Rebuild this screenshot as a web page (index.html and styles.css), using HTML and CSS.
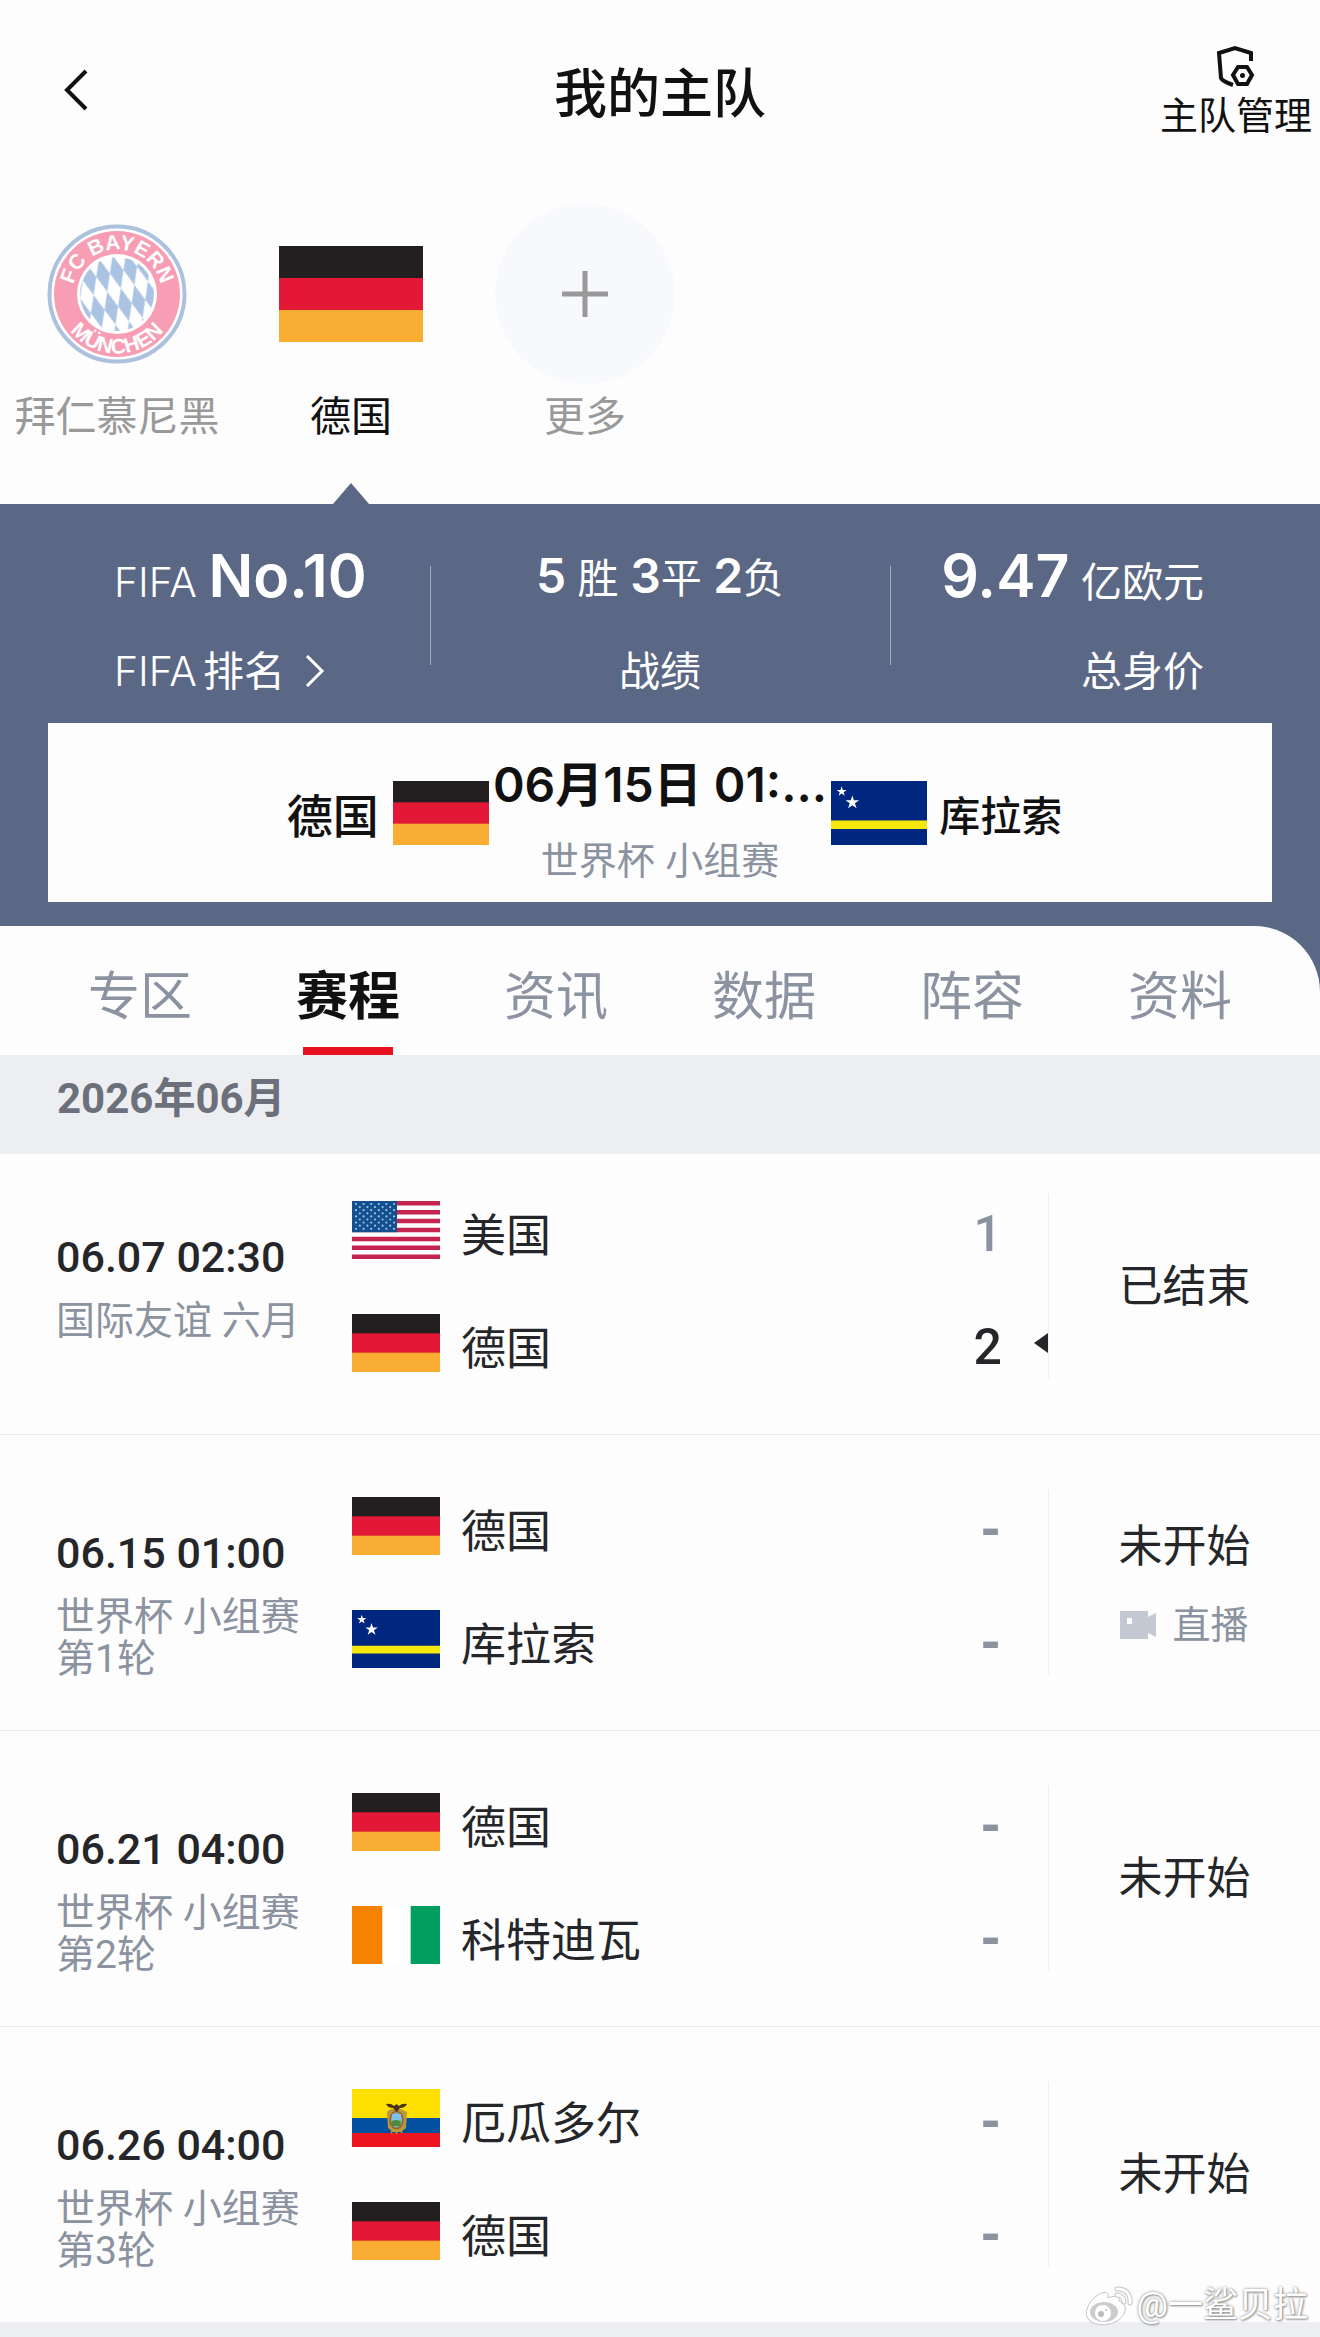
FILE: index.html
```html
<!DOCTYPE html>
<html lang="zh-CN">

<head>
    <meta charset="UTF-8">
    <meta name="viewport" content="width=device-width, initial-scale=1.0">
    <title>我的主队</title>
    <link rel="stylesheet" href="styles.css">
</head>

<body>
    <!-- Shared flags -->
    <svg class="sprite" aria-hidden="true">
        <symbol id="flag-de" viewBox="0 0 90 60" preserveAspectRatio="none">
            <rect width="90" height="60" fill="#231f20" />
            <rect y="20" width="90" height="40" fill="#e31836" />
            <rect y="40" width="90" height="20" fill="#f9ae33" />
        </symbol>
        <symbol id="flag-cw" viewBox="0 0 90 60" preserveAspectRatio="none">
            <rect width="90" height="60" fill="#002780" />
            <rect y="37" width="90" height="8" fill="#f7e80c" />
            <path fill="#fff" d="M10 5l1.1 3.4h3.6l-2.9 2.1 1.1 3.4-2.9-2.1-2.9 2.1 1.1-3.4-2.9-2.1h3.6z" />
            <path fill="#fff" d="M20 13.5l1.5 4.6h4.9l-4 2.8 1.6 4.7-4-2.9-4 2.9 1.6-4.7-4-2.8h4.9z" />
        </symbol>
        <symbol id="flag-us" viewBox="0 0 88 58" preserveAspectRatio="none">
            <rect width="88" height="58" fill="#fff" />
            <path stroke="#c4244f" stroke-width="4.46" d="M0 2.2h88M0 11.2h88M0 20.1h88M0 29h88M0 37.9h88M0 46.8h88M0 55.8h88" />
            <rect width="45" height="31.2" fill="#14508f" />
            <path stroke="#9dc0e0" stroke-width="2.2" stroke-linecap="round" stroke-dasharray="0 7.6" d="M4 3h40M4 9.2h40M4 15.4h40M4 21.6h40M4 27.8h40" />
            <path stroke="#9dc0e0" stroke-width="2.2" stroke-linecap="round" stroke-dasharray="0 7.6" d="M7.8 6.1h32M7.8 12.3h32M7.8 18.5h32M7.8 24.7h32" />
        </symbol>
        <symbol id="flag-ci" viewBox="0 0 90 60" preserveAspectRatio="none">
            <rect width="90" height="60" fill="#fff" />
            <rect width="31" height="60" fill="#f58200" />
            <rect x="60" width="30" height="60" fill="#009f60" />
        </symbol>
        <symbol id="flag-ec" viewBox="0 0 88 58" preserveAspectRatio="none">
            <rect width="88" height="58" fill="#ffdf00" />
            <rect y="29" width="88" height="15" fill="#0350a0" />
            <rect y="44" width="88" height="14" fill="#ed1620" />
            <path fill="#b59a3c" d="M35 23l4-3h10l6 3-1 16-5 4h-8l-5-4z" />
            <ellipse cx="44.500" cy="31" rx="6.500" ry="8.500" fill="#74b5a5" stroke="#a35a28" stroke-width="1.500" />
            <path fill="#7fc0e8" d="M40 25h9v6h-9z" />
            <path fill="#4c8c3c" d="M39 33q5-4 10 0l-1 4h-8z" />
            <path fill="#4a3319" d="M34 15q5-1 8 2l2.500-2 2.500 2q3-3 8-2-2 4-7 4l-3.500 4-3.500-4q-5 0-7-4z" />
            <path stroke="#c79a2c" stroke-width="1.500" d="M41 41l-2 3M44.500 42v3M48 41l2 3" />
        </symbol>
    </svg>

    <header class="header">
        <button type="button" class="back" aria-label="返回">
            <svg width="26" height="44" viewBox="0 0 26 44" fill="none" stroke="#111" stroke-width="4">
                <path d="M23 3L4 22l19 19" />
            </svg>
        </button>
        <h1>我的主队</h1>
        <button type="button" class="manage">
            <svg width="42" height="44" viewBox="0 0 42 44" fill="none" stroke="#111" stroke-width="4">
                <path d="M36 17V9L20 4 4 9l2 25q1 3 12 7" />
                <path d="M23 23h9l5 8-5 9h-9l-5-9z" />
                <circle cx="27.500" cy="31.500" r="2.500" fill="#111" stroke="none" />
            </svg>
            <span>主队管理</span>
        </button>
    </header>

    <nav class="teams">
        <a href="#" class="team">
            <span class="team-pic">
                <svg width="140" height="140" viewBox="0 0 140 140">
                    <defs>
                        <path id="arc-top" d="M25.500 70a44.500 44.500 0 0 1 89 0v12" />
                        <path id="arc-bottom" d="M10.500 70a59.500 59.500 0 0 0 119 0" />
                        <pattern id="lozenge" width="14" height="34" patternUnits="userSpaceOnUse" patternTransform="translate(67 66) rotate(-14)">
                            <rect width="14" height="34" fill="#fff" />
                            <path fill="#abc3e3" d="M7 0l7 17-7 17-7-17z" />
                        </pattern>
                    </defs>
                    <circle cx="70" cy="70" r="67.500" fill="#fff" stroke="#abc1de" stroke-width="4" />
                    <circle cx="70" cy="70" r="63" fill="#f79db4" />
                    <circle cx="70" cy="70" r="40" fill="#fff" />
                    <circle cx="70" cy="70" r="37" fill="url(#lozenge)" />
                    <text class="crest-text">
                        <textPath href="#arc-top" startOffset="46%">FC BAYERN</textPath>
                    </text>
                    <text class="crest-text">
                        <textPath href="#arc-bottom" startOffset="50%">MÜNCHEN</textPath>
                    </text>
                </svg>
            </span>
            <span class="team-label">拜仁慕尼黑</span>
        </a>
        <a href="#" class="team active">
            <span class="team-pic"><svg class="flag-big"><use href="#flag-de" /></svg></span>
            <span class="team-label">德国</span>
        </a>
        <a href="#" class="team">
            <span class="team-pic more">
                <svg width="46" height="46" viewBox="0 0 46 46" stroke="#999" stroke-width="5">
                    <path d="M23 0v46M0 23h46" />
                </svg>
            </span>
            <span class="team-label">更多</span>
        </a>
    </nav>

    <section class="summary">
        <div class="stats">
            <a href="#" class="stat stat-left">
                <p class="stat-value">FIFA <b>No.10</b></p>
                <p class="stat-label">FIFA<span class="rank">排名</span>
                    <svg width="20" height="32" viewBox="0 0 20 32" fill="none" stroke="#fff" stroke-width="3">
                        <path d="M2 1l15 15L2 31" />
                    </svg>
                </p>
            </a>
            <div class="stat">
                <p class="stat-value record"><b>5</b> 胜 <b>3</b>平 <b>2</b>负</p>
                <p class="stat-label">战绩</p>
            </div>
            <div class="stat stat-right">
                <p class="stat-value"><b>9.47</b> 亿欧元</p>
                <p class="stat-label">总身价</p>
            </div>
        </div>

        <a href="#" class="next-match">
            <span class="side home"><span class="home-name">德国</span><svg class="flag-mid"><use href="#flag-de" /></svg></span>
            <span class="when">
                <span class="when-date">06月15日 01:...</span>
                <span class="when-cup">世界杯 小组赛</span>
            </span>
            <span class="side"><svg class="flag-mid"><use href="#flag-cw" /></svg><span class="away-name">库拉索</span></span>
        </a>
    </section>

    <div class="tabs-wrap">
        <nav class="tabs">
            <a href="#">专区</a>
            <a href="#" class="active">赛程</a>
            <a href="#">资讯</a>
            <a href="#">数据</a>
            <a href="#">阵容</a>
            <a href="#">资料</a>
        </nav>
    </div>

    <main>
        <h2 class="month">2026年06月</h2>

        <article class="match first">
            <div class="info">
                <p class="time">06.07 02:30</p>
                <p class="cup">国际友谊 六月</p>
            </div>
            <div class="sides">
                <div class="row"><svg class="flag"><use href="#flag-us" /></svg><span class="name">美国</span><span class="score">1</span></div>
                <div class="row win"><svg class="flag"><use href="#flag-de" /></svg><span class="name">德国</span><span class="score">2</span></div>
            </div>
            <div class="status">已结束</div>
        </article>

        <article class="match">
            <div class="info">
                <p class="time">06.15 01:00</p>
                <p class="cup">世界杯 小组赛<br>第1轮</p>
            </div>
            <div class="sides">
                <div class="row"><svg class="flag"><use href="#flag-de" /></svg><span class="name">德国</span><span class="score none">-</span></div>
                <div class="row"><svg class="flag"><use href="#flag-cw" /></svg><span class="name">库拉索</span><span class="score none">-</span></div>
            </div>
            <div class="status">
                未开始
                <a href="#" class="live">
                    <svg width="36" height="28" viewBox="0 0 36 28">
                        <path fill="#c4c8d3" fill-rule="evenodd" d="M0 0h28v6l8-4v24l-8-4v6H0zM7 7v6h5V7z" />
                    </svg>
                    直播
                </a>
            </div>
        </article>

        <article class="match">
            <div class="info">
                <p class="time">06.21 04:00</p>
                <p class="cup">世界杯 小组赛<br>第2轮</p>
            </div>
            <div class="sides">
                <div class="row"><svg class="flag"><use href="#flag-de" /></svg><span class="name">德国</span><span class="score none">-</span></div>
                <div class="row"><svg class="flag"><use href="#flag-ci" /></svg><span class="name">科特迪瓦</span><span class="score none">-</span></div>
            </div>
            <div class="status">未开始</div>
        </article>

        <article class="match">
            <div class="info">
                <p class="time">06.26 04:00</p>
                <p class="cup">世界杯 小组赛<br>第3轮</p>
            </div>
            <div class="sides">
                <div class="row"><svg class="flag"><use href="#flag-ec" /></svg><span class="name">厄瓜多尔</span><span class="score none">-</span></div>
                <div class="row"><svg class="flag"><use href="#flag-de" /></svg><span class="name">德国</span><span class="score none">-</span></div>
            </div>
            <div class="status">未开始</div>
        </article>

        <div class="watermark">
            <svg width="48" height="40" viewBox="0 0 48 40">
                <path fill="#fff" stroke="#c4c4c4" d="M17 7c5-2 7 0 6 5 6-3 13-2 11 3 10 3 7 15-2 20-10 6-26 5-30-4C-1 22 8 10 17 7z" />
                <ellipse cx="19" cy="26" rx="14" ry="10" fill="#ccc" />
                <circle cx="18" cy="27" r="8" fill="#fff" />
                <circle cx="16" cy="28" r="3" fill="#bbb" />
                <circle cx="21" cy="24" r="1" fill="#bbb" />
                <g fill="none" stroke-linecap="round">
                    <path stroke="#c4c4c4" stroke-width="5" d="M32 3c8-1 14 5 13 14M32 9c4 0 7 3 7 7" />
                    <path stroke="#fff" stroke-width="3" d="M32 3c8-1 14 5 13 14M32 9c4 0 7 3 7 7" />
                </g>
            </svg>
            <span>@一鲨贝拉</span>
        </div>
    </main>
</body>

</html>
```
FILE: styles.css
```css
* {
    box-sizing: border-box;
}

body {
    margin: 0;
    font-family: Inter, "Noto Sans CJK SC", sans-serif;
    background-color: #edeef2;
    color: #111;
}

h1,
h2,
p {
    margin: 0;
}

a {
    color: inherit;
    text-decoration: none;
}

button {
    padding: 0;
    border: none;
    background: none;
    color: inherit;
    font-family: inherit;
    cursor: pointer;
}

svg {
    display: block;
    flex-shrink: 0;
}

.sprite {
    position: absolute;
    width: 0;
    height: 0;
}

/* Header */
.header {
    display: grid;
    grid-template-columns: 1fr auto 1fr;
    align-items: center;
    height: 186px;
    background-color: #fdfdfd;
}

.header h1 {
    padding-top: 2px;
    font-size: 53px;
    font-weight: 500;
    line-height: 80px;
}

.back {
    justify-self: start;
    padding: 0 0 6px 63px;
}

.manage {
    justify-self: end;
    display: flex;
    flex-direction: column;
    align-items: center;
    padding-right: 8px;
    font-size: 38px;
    line-height: 54px;
}

/* Followed teams */
.teams {
    display: flex;
    padding: 18px 0 56px;
    background-color: #fdfdfd;
}

.team {
    position: relative;
    display: flex;
    flex-direction: column;
    align-items: center;
    width: 234px;
    color: #999;
}

.team.active {
    color: #111;
}

.team.active::after {
    content: "";
    position: absolute;
    bottom: -56px;
    border: 18px solid transparent;
    border-top: none;
    border-bottom: 21px solid #5b6885;
}

.team-pic {
    display: flex;
    align-items: center;
    justify-content: center;
    width: 180px;
    height: 180px;
}

.more {
    border-radius: 50%;
    background-color: #f8f9fd;
}

.team-label {
    font-size: 41px;
    line-height: 64px;
}

.crest-text {
    fill: #fff;
    font-family: "Liberation Sans", sans-serif;
    font-size: 21px;
    font-weight: 700;
    text-anchor: middle;
}

.flag-big {
    width: 144px;
    height: 96px;
}

/* Summary */
.summary {
    padding-bottom: 24px;
    background-color: #5b6885;
    color: #fff;
}

.stats {
    display: grid;
    grid-template-columns: 15fr 16fr 15fr;
    padding: 36px 0 22px;
}

.stat {
    position: relative;
    text-align: center;
}

.stat + .stat::before {
    content: "";
    position: absolute;
    top: 26px;
    left: 0;
    width: 1px;
    height: 99px;
    background-color: #a5adbd;
}

.stat-left {
    padding-left: 114px;
    font-weight: 300;
    text-align: left;
}

.stat-right {
    padding-right: 116px;
    text-align: right;
}

.stat-value {
    height: 72px;
    margin-bottom: 29px;
    font-size: 41px;
    line-height: 72px;
}

.stat-value b {
    font-size: 59px;
    font-weight: 600;
}

.stat-value.record b {
    font-size: 48px;
}

.stat-label {
    font-size: 41px;
    line-height: 60px;
}

.stat-left .stat-label {
    display: flex;
    align-items: center;
}

.rank {
    margin: 0 20px 0 6px;
    font-weight: 400;
}

.next-match {
    display: grid;
    grid-template-columns: 1fr 28% 1fr;
    align-items: center;
    height: 179px;
    margin: 0 48px;
    background-color: #fdfdfd;
    color: #111;
}

.side {
    display: flex;
    align-items: center;
}

.home {
    justify-content: flex-end;
}

.home-name {
    margin-right: 14px;
    font-size: 46px;
    font-weight: 500;
}

.away-name {
    margin-left: 12px;
    font-size: 41px;
    font-weight: 500;
}

.flag-mid {
    width: 96px;
    height: 64px;
}

.when {
    padding-top: 14px;
    text-align: center;
    white-space: nowrap;
}

.when-date,
.when-cup {
    display: block;
}

.when-date {
    font-size: 48px;
    font-weight: 600;
    line-height: 80px;
}

.when-cup {
    color: #8b92a0;
    font-size: 38px;
    line-height: 70px;
}

/* Tabs */
.tabs-wrap {
    background-color: #5b6885;
}

.tabs {
    display: flex;
    height: 129px;
    padding: 0 36px;
    border-top-right-radius: 66px;
    background-color: #fdfdfd;
}

.tabs a {
    position: relative;
    flex: 1;
    color: #8b92a0;
    font-size: 52px;
    line-height: 142px;
    text-align: center;
}

.tabs .active {
    color: #111;
    font-weight: 700;
}

.tabs .active::after {
    content: "";
    position: absolute;
    bottom: 0;
    left: 50%;
    width: 90px;
    height: 8px;
    margin-left: -45px;
    background-color: #e6101f;
}

/* Schedule */
main {
    position: relative;
    padding-bottom: 14px;
    font-family: Roboto, "Noto Sans CJK SC", sans-serif;
    color: #252629;
}

.month {
    height: 99px;
    padding-left: 57px;
    color: #6c707b;
    font-size: 42px;
    font-weight: 700;
    line-height: 88px;
}

.match {
    display: grid;
    grid-template-columns: 352px 1fr 272px;
    padding: 62px 0;
    border-bottom: 1px solid #e9eaee;
    background-color: #fdfdfd;
}

.match.first {
    padding-top: 47px;
}

.match:last-of-type {
    border-bottom: none;
}

.info {
    height: 171px;
    padding: 30px 0 0 56px;
    white-space: nowrap;
}

.time {
    font-size: 43px;
    font-weight: 500;
    line-height: 52px;
}

.cup {
    margin-top: 17px;
    color: #8b92a0;
    font-size: 39px;
    line-height: 42px;
}

.sides {
    display: flex;
    flex-direction: column;
    gap: 55px;
}

.row {
    position: relative;
    display: flex;
    align-items: center;
    height: 58px;
    padding-right: 46px;
}

.flag {
    width: 88px;
    height: 58px;
}

.name {
    margin-left: 21px;
    padding-top: 5px;
    font-size: 45px;
}

.score {
    margin-left: auto;
    padding-top: 8px;
    color: #8b92a0;
    font-size: 50px;
    font-weight: 500;
}

.score.none {
    font-weight: 900;
}

.win .score {
    color: #252629;
}

.win::after {
    content: "";
    position: absolute;
    right: 0;
    border: 10px solid transparent;
    border-left: none;
    border-right: 14px solid #252629;
}

.status {
    display: flex;
    flex-direction: column;
    align-items: center;
    justify-content: center;
    gap: 20px;
    height: 185px;
    margin: -7px 0;
    border-left: 1px solid #eeeff3;
    font-size: 44px;
    line-height: 64px;
}

.live {
    display: flex;
    align-items: center;
    gap: 16px;
    color: #8b92a0;
    font-size: 38px;
    line-height: 52px;
}

.watermark {
    position: absolute;
    right: 12px;
    bottom: 8px;
    display: flex;
    align-items: center;
    gap: 4px;
    color: #fff;
    font-size: 35px;
    line-height: 44px;
    text-shadow: 0 0 3px #888, 1px 1px 2px #999;
}
```
